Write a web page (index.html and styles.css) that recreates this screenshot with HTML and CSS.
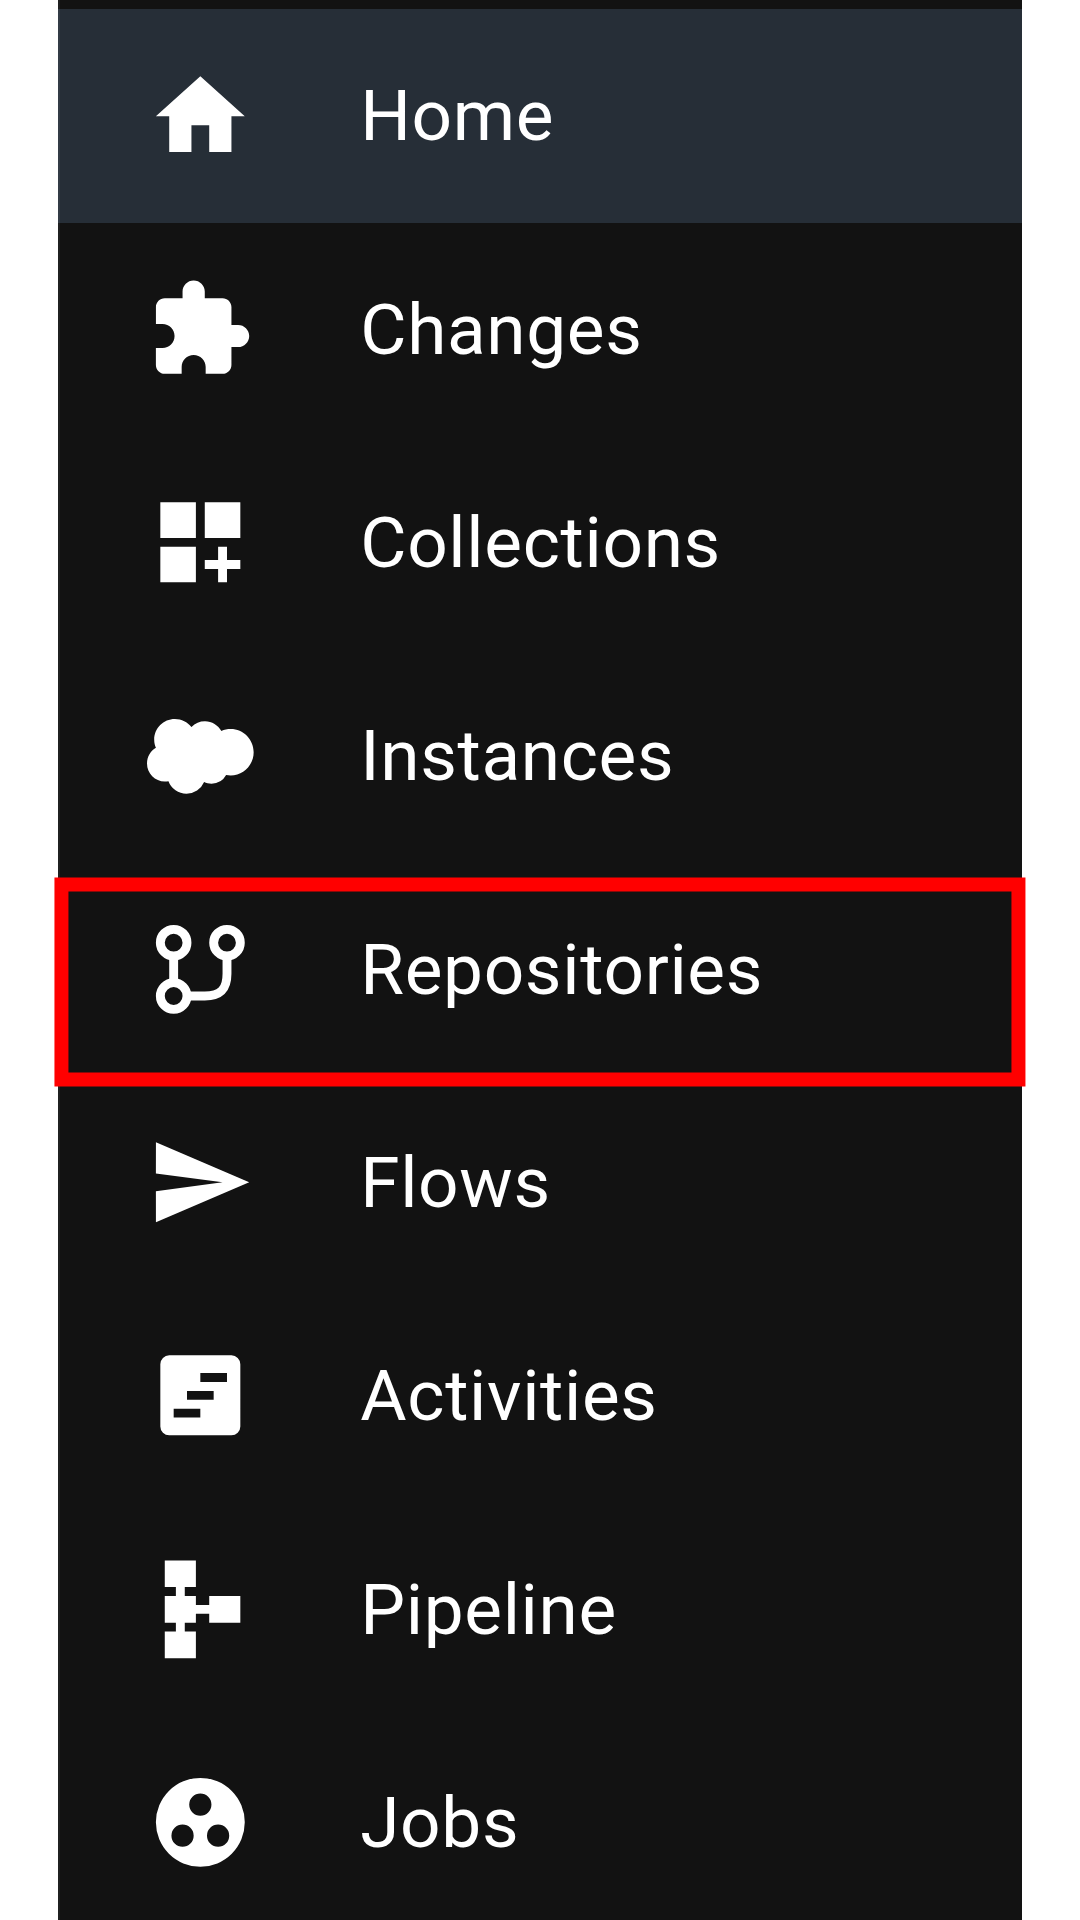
FILE: index.html
```html
<!DOCTYPE html>
<html lang="en">
<head>
<meta charset="utf-8">
<title>Navigation</title>
<link rel="stylesheet" href="styles.css">
</head>
<body>
<nav class="sidebar">
  <a class="item active">
    <svg class="icon" viewBox="0 0 24 24"><path d="M10 20v-6h4v6h5v-8h3L12 3 2 12h3v8z"/></svg>
    <span class="label">Home</span>
  </a>
  <a class="item">
    <svg class="icon" viewBox="0 0 24 24"><path d="M20.500 11H19V7c0-1.100-.9-2-2-2h-4V3.500C13 2.120 11.880 1 10.500 1S8 2.120 8 3.500V5H4c-1.100 0-1.990.9-1.990 2v3.800H3.500c1.490 0 2.700 1.210 2.700 2.700s-1.210 2.700-2.700 2.700H2V20c0 1.100.9 2 2 2h3.800v-1.500c0-1.490 1.210-2.700 2.700-2.700s2.700 1.210 2.700 2.700V22H17c1.100 0 2-.9 2-2v-4h1.500c1.380 0 2.500-1.120 2.500-2.500S21.880 11 20.500 11z"/></svg>
    <span class="label">Changes</span>
  </a>
  <a class="item">
    <svg class="icon" viewBox="0 0 24 24"><path d="M3 3h8v8H3zM13 3h8v8h-8zM3 13h8v8H3zM18 13h-2v3h-3v2h3v3h2v-3h3v-2h-3z"/></svg>
    <span class="label">Collections</span>
  </a>
  <a class="item">
    <svg class="icon" viewBox="0 0 24 24"><path d="M10.006 5.415a4.195 4.195 0 0 1 3.045-1.306c1.560 0 2.954.9 3.690 2.205.63-.3 1.350-.45 2.100-.45 2.850 0 5.159 2.340 5.159 5.220s-2.310 5.220-5.176 5.220c-.345 0-.69-.044-1.020-.104a3.750 3.750 0 0 1-3.300 1.950c-.6 0-1.155-.15-1.650-.375A4.314 4.314 0 0 1 8.880 20.400a4.302 4.302 0 0 1-4.050-2.820c-.27.062-.54.076-.825.076-2.204 0-4.005-1.800-4.005-4.050 0-1.500.811-2.805 2.010-3.510-.255-.57-.39-1.200-.39-1.846 0-2.580 2.100-4.650 4.650-4.650 1.530 0 2.850.705 3.720 1.800z"/></svg>
    <span class="label">Instances</span>
  </a>
  <a class="item selected">
    <svg class="icon line" viewBox="0 0 24 24"><circle cx="6" cy="6" r="3"/><circle cx="18" cy="6" r="3"/><circle cx="6" cy="18" r="3"/><path d="M6 9v6M18 9v4c0 3.500-1.400 5-5 5H9"/></svg>
    <span class="label">Repositories</span>
    <svg class="outline" viewBox="0 0 980 220"><rect x="11.450" y="14.500" width="957" height="195"/></svg>
  </a>
  <a class="item">
    <svg class="icon" viewBox="0 0 24 24"><path d="M2.010 21L23 12 2.010 3 2 10l15 2-15 2z"/></svg>
    <span class="label">Flows</span>
  </a>
  <a class="item">
    <svg class="icon" viewBox="0 0 24 24"><path fill-rule="evenodd" d="M5 3h14a2 2 0 0 1 2 2v14a2 2 0 0 1-2 2H5a2 2 0 0 1-2-2V5a2 2 0 0 1 2-2zM12 7v2h6V7zM9 11v2h6v-2zM6 15v2h6v-2z"/></svg>
    <span class="label">Activities</span>
  </a>
  <a class="item">
    <svg class="icon" viewBox="0 0 24 24"><path d="M14 9v2h-3V9H8.500V7H11V1H4v6h2.500v2H4v6h2.500v2H4v6h7v-6H8.500v-2H11v-2h3v2h7V9z"/></svg>
    <span class="label">Pipeline</span>
  </a>
  <a class="item">
    <svg class="icon" viewBox="0 0 24 24"><path fill-rule="evenodd" d="M12 2a10 10 0 1 0 0 20 10 10 0 0 0 0-20zM12 5.500a2.500 2.500 0 1 1 0 5 2.500 2.500 0 0 1 0-5zM8 12.500a2.500 2.500 0 1 1 0 5 2.500 2.500 0 0 1 0-5zM16 12.500a2.500 2.500 0 1 1 0 5 2.500 2.500 0 0 1 0-5z"/></svg>
    <span class="label">Jobs</span>
  </a>
</nav>
</body>
</html>
```

FILE: styles.css
```css
* {
  box-sizing: border-box;
}

body {
  margin: 0;
  background: #fff;
  font-family: Roboto, "Liberation Sans", sans-serif;
}

.sidebar {
  width: 964px;
  height: 1920px;
  margin-left: 58px;
  padding-top: 9.330px;
  background: #121212;
  box-shadow: inset 2px 0 #1f2020;
}

.item {
  position: relative;
  display: flex;
  align-items: center;
  gap: 106.667px;
  height: 213.300px;
  padding-left: 88.889px;
  color: #fff;
}

.active {
  background: #262e37;
  box-shadow: inset 2px 0 #323b45;
}

.icon {
  flex: none;
  width: 106.667px;
  height: 106.667px;
  fill: currentColor;
}

.line {
  fill: none;
  stroke: currentColor;
  stroke-width: 2;
}

.label {
  font-size: 71.111px;
  line-height: 1;
  letter-spacing: 0.009375em;
}

/* Annotation frame, slightly wider than the panel */
.outline {
  position: absolute;
  left: -8px;
  top: 7.470px;
  width: 980px;
  height: 220px;
  fill: none;
  stroke: #f00;
  stroke-width: 14;
}
```
